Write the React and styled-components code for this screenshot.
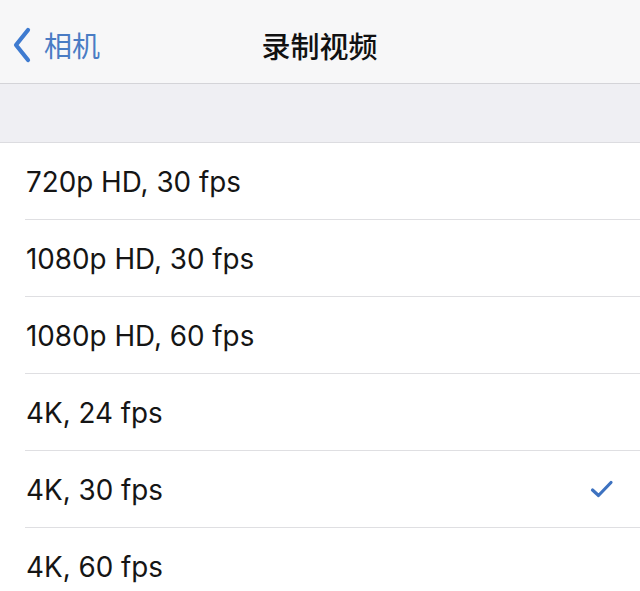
import React from "react";
import styled, { createGlobalStyle } from "styled-components";

const GlobalStyle = createGlobalStyle`
  html, body {
    margin: 0;
    padding: 0;
    background: #ffffff;
  }
  body {
    font-family: Inter, "Noto Sans CJK SC", sans-serif;
  }
`;

const options = [
  "720p HD, 30 fps",
  "1080p HD, 30 fps",
  "1080p HD, 60 fps",
  "4K, 24 fps",
  "4K, 30 fps",
  "4K, 60 fps",
];

const selected = "4K, 30 fps";

function App() {
  return (
    <Root>
      <GlobalStyle />
      <NavBar>
        <BackButton>
          <svg width="20" height="36" viewBox="0 0 20 36">
            <path
              d="M16 3 L4 18 L16 33"
              fill="none"
              stroke="#3f7bd0"
              strokeWidth="4.2"
              strokeLinecap="round"
              strokeLinejoin="round"
            />
          </svg>
          <BackLabel>相机</BackLabel>
        </BackButton>
        <Title>录制视频</Title>
      </NavBar>
      <Spacer />
      <List>
        {options.map((label) => (
          <Row key={label}>
            <RowLabel>{label}</RowLabel>
            {label === selected && (
              <svg width="24" height="20" viewBox="0 0 24 20">
                <path
                  d="M2.5 11 L8.5 16.5 L21 3.5"
                  fill="none"
                  stroke="#3d72c0"
                  strokeWidth="3.2"
                  strokeLinecap="round"
                  strokeLinejoin="round"
                />
              </svg>
            )}
          </Row>
        ))}
      </List>
    </Root>
  );
}

const Root = styled.div`
  width: 640px;
  height: 591px;
  overflow: hidden;
  display: flex;
  flex-direction: column;
  background: #ffffff;
`;

const NavBar = styled.div`
  position: relative;
  height: 83px;
  flex: 0 0 auto;
  display: flex;
  align-items: center;
  justify-content: center;
  background: #f7f7f8;
  border-bottom: 1px solid #d4d4d8;
`;

const BackButton = styled.div`
  position: absolute;
  left: 12px;
  top: 27px;
  display: flex;
  align-items: center;
  gap: 12px;
`;

const BackLabel = styled.span`
  font-family: "Noto Sans CJK SC", sans-serif;
  font-size: 28px;
  color: #4a7cc4;
  line-height: 36px;
`;

const Title = styled.span`
  font-family: "Noto Sans CJK SC", sans-serif;
  font-size: 29px;
  font-weight: 500;
  color: #111111;
  margin-top: 6px;
  margin-left: -1px;
`;

const Spacer = styled.div`
  height: 58px;
  flex: 0 0 auto;
  background: #efeff3;
  border-bottom: 1px solid #dcdce0;
`;

const List = styled.div`
  display: flex;
  flex-direction: column;
  padding-left: 25px;
`;

const Row = styled.div`
  height: 76px;
  flex: 0 0 auto;
  display: flex;
  align-items: center;
  justify-content: space-between;
  padding-right: 26px;
  border-bottom: 1px solid #dfdfe2;
`;

const RowLabel = styled.span`
  font-family: Inter, sans-serif;
  font-size: 27.8px;
  color: #151515;
  margin-left: 1px;
  margin-top: 2px;
`;

export default App;
